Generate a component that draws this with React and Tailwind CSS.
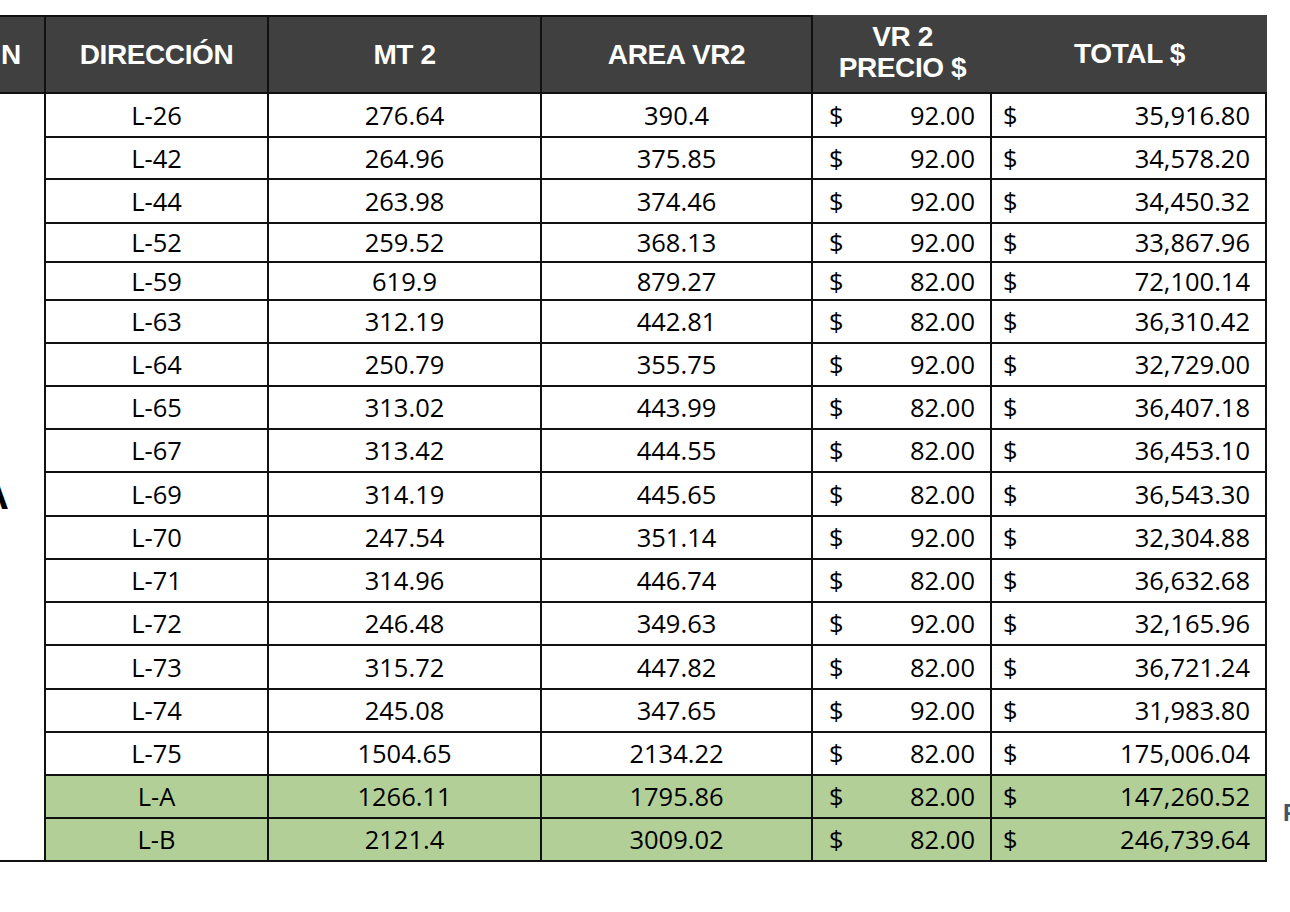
import React from "react";

const rows = [
  { lot: "L-26", mt: "276.64", area: "390.4", price: "92.00", total: "35,916.80", h: "h-[44px]" },
  { lot: "L-42", mt: "264.96", area: "375.85", price: "92.00", total: "34,578.20", h: "h-[42px]" },
  { lot: "L-44", mt: "263.98", area: "374.46", price: "92.00", total: "34,450.32", h: "h-[44px]" },
  { lot: "L-52", mt: "259.52", area: "368.13", price: "92.00", total: "33,867.96", h: "h-[39px]" },
  { lot: "L-59", mt: "619.9", area: "879.27", price: "82.00", total: "72,100.14", h: "h-[38px]" },
  { lot: "L-63", mt: "312.19", area: "442.81", price: "82.00", total: "36,310.42", h: "h-[43px]" },
  { lot: "L-64", mt: "250.79", area: "355.75", price: "92.00", total: "32,729.00", h: "h-[43px]" },
  { lot: "L-65", mt: "313.02", area: "443.99", price: "82.00", total: "36,407.18", h: "h-[43px]" },
  { lot: "L-67", mt: "313.42", area: "444.55", price: "82.00", total: "36,453.10", h: "h-[43px]" },
  { lot: "L-69", mt: "314.19", area: "445.65", price: "82.00", total: "36,543.30", h: "h-[44px]" },
  { lot: "L-70", mt: "247.54", area: "351.14", price: "92.00", total: "32,304.88", h: "h-[43px]" },
  { lot: "L-71", mt: "314.96", area: "446.74", price: "82.00", total: "36,632.68", h: "h-[43px]" },
  { lot: "L-72", mt: "246.48", area: "349.63", price: "92.00", total: "32,165.96", h: "h-[43px]" },
  { lot: "L-73", mt: "315.72", area: "447.82", price: "82.00", total: "36,721.24", h: "h-[44px]" },
  { lot: "L-74", mt: "245.08", area: "347.65", price: "92.00", total: "31,983.80", h: "h-[43px]" },
  { lot: "L-75", mt: "1504.65", area: "2134.22", price: "82.00", total: "175,006.04", h: "h-[43px]" },
  { lot: "L-A", mt: "1266.11", area: "1795.86", price: "82.00", total: "147,260.52", h: "h-[43px]", green: true },
  { lot: "L-B", mt: "2121.4", area: "3009.02", price: "82.00", total: "246,739.64", h: "h-[43px]", green: true },
];

const head = "font-['Liberation_Sans',Arial,sans-serif] font-bold text-white text-[28px] tracking-[-0.4px]";

function HeaderRow() {
  return (
    <div className={`flex h-[79px] w-[1267px] bg-[#404040] border-b-2 border-[#111] ${head}`}>
      <div className="w-[46px] border-r-2 border-t-2 border-[#111] flex items-center overflow-hidden">
        <span className="pl-[1px]">N</span>
      </div>
      <div className="w-[223px] border-r-2 border-t-2 border-[#111] flex items-center justify-center">
        DIRECCIÓN
      </div>
      <div className="w-[273px] border-r-2 border-t-2 border-[#111] flex items-center justify-center">
        MT 2
      </div>
      <div className="w-[271px] border-r-2 border-t-2 border-[#111] flex items-center justify-center">
        AREA VR2
      </div>
      <div className="w-[179px] flex flex-col items-center justify-center leading-[31px] pb-[3px]">
        <span>VR 2</span>
        <span>PRECIO $</span>
      </div>
      <div className="w-[275px] flex items-center justify-center">TOTAL $</div>
    </div>
  );
}

function BodyRow({ r }) {
  const bg = r.green ? "bg-[#b3cf98]" : "bg-white";
  return (
    <div className={`flex ${r.h} ${bg} border-b-2 border-[#111]`}>
      <div className="w-[223px] border-r-2 border-[#111] flex items-center justify-center">{r.lot}</div>
      <div className="w-[273px] border-r-2 border-[#111] flex items-center justify-center">{r.mt}</div>
      <div className="w-[271px] border-r-2 border-[#111] flex items-center justify-center">{r.area}</div>
      <div className="w-[179px] border-r-2 border-[#111] flex items-center justify-between pl-[16px] pr-[15px]">
        <span>$</span>
        <span>{r.price}</span>
      </div>
      <div className="w-[275px] border-r-2 border-[#111] flex items-center justify-between pl-[11px] pr-[15px]">
        <span>$</span>
        <span>{r.total}</span>
      </div>
    </div>
  );
}

export default function App() {
  return (
    <div className="w-[1290px] h-[912px] overflow-hidden bg-white">
      <div className="flex pt-[15px]">
        <div className="w-[1267px] shrink-0">
          <HeaderRow />
          <div className="flex font-['Open_Sans',sans-serif] text-[25.5px] text-black">
            <div className="w-[46px] shrink-0 border-r-2 border-b-2 border-[#111] flex items-center overflow-hidden pt-[36px]">
              <span className="ml-[-20px] font-['Liberation_Sans',Arial,sans-serif] font-bold text-[40px] text-black">A</span>
            </div>
            <div className="flex flex-col">
              {rows.map((r) => (
                <BodyRow key={r.lot} r={r} />
              ))}
            </div>
          </div>
        </div>
        <div className="pl-[16px] pt-[780px] font-['Liberation_Sans',Arial,sans-serif] font-semibold text-[24px] text-[#44546a] whitespace-nowrap">
          F
        </div>
      </div>
    </div>
  );
}
